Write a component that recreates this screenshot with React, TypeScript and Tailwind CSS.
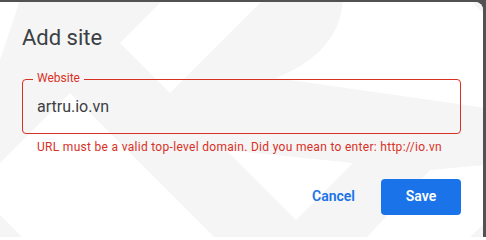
import React from "react";

// faint geometric watermark behind the dialog content
function Watermark() {
  return (
    <svg
      className="absolute inset-0 pointer-events-none"
      width="483"
      height="235"
      viewBox="0 2 483 235"
      aria-hidden="true"
    >
      <rect x="0" y="0" width="486" height="240" fill="#f5f5f5" />
      <polygon points="0,0 20,0 0,60" fill="#ffffff" />
      <polygon points="120,43 163,0 263,0 170,93" fill="#ffffff" />
      <path d="M343,0 Q340,52 276,78 L486,108 L486,16 L470,0 Z" fill="#ffffff" />
      <polygon points="70,93 0,163 0,215 22,237 214,237" fill="#ffffff" />
      <polygon points="226,150 353,163 296,220" fill="#ffffff" />
      <polygon points="430,170 486,165 486,222 470,237 367,237" fill="#ffffff" />
    </svg>
  );
}

export default function App() {
  return (
    <div
      className="h-[237px] w-[486px] bg-[#525252] pt-[2px] overflow-hidden"
      style={{ fontFamily: "Roboto, 'Liberation Sans', sans-serif" }}
    >
      <div className="relative w-[483px] h-[235px] bg-white rounded-tr-[8px] overflow-hidden">
        <Watermark />

        <div className="relative px-[22px] pt-[19.5px]">
          {/* Title */}
          <h2 className="text-[22px] leading-8 text-[#3c4043] font-normal">
            Add site
          </h2>

          {/* Outlined field */}
          <div className="relative mt-[25.5px] h-[55px] border border-[#d93025] rounded-[4px] pt-[14.5px]">
            <span className="absolute left-[10px] -top-[10px] px-1 bg-[#f5f5f5] text-[12px] leading-4 text-[#d93025]">
              Website
            </span>
            <p className="pl-[14px] text-[16px] leading-6 text-[#3c4043]">artru.io.vn</p>
          </div>

          {/* Error */}
          <p className="mt-[4.5px] pl-[15px] text-[12px] leading-4 tracking-[0.3px] text-[#d93025]">
            URL must be a valid top-level domain. Did you mean to enter: http://io.vn
          </p>

          {/* Actions */}
          <div className="mt-6 flex justify-end items-center gap-[10px]">
            <button className="h-9 px-4 rounded-[4px] text-[14px] font-semibold text-[#1a73e8]">
              Cancel
            </button>
            <button className="h-9 w-20 rounded-[4px] bg-[#1a73e8] text-[14px] font-semibold text-white">
              Save
            </button>
          </div>
        </div>
      </div>
    </div>
  );
}
